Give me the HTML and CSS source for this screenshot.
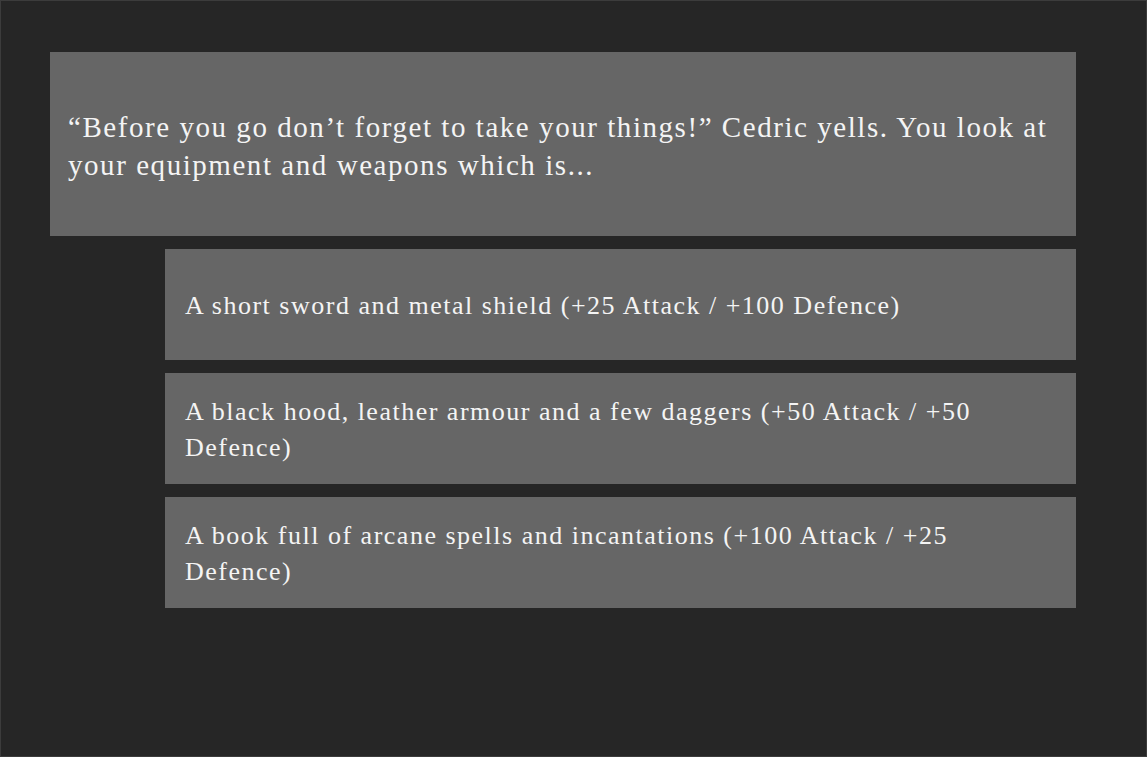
FILE: index.html
```html
<!DOCTYPE html>
<html>
<head>
<meta charset="utf-8">
<link rel="stylesheet" href="styles.css">
</head>
<body>
<div class="screen">
  <div class="story">
    <p>“Before you go don’t forget to take your things!” Cedric yells. You look at your equipment and weapons which is...</p>
  </div>
  <div class="choices">
    <div class="choice"><p>A short sword and metal shield (+25 Attack / +100 Defence)</p></div>
    <div class="choice"><p>A black hood, leather armour and a few daggers (+50 Attack / +50 Defence)</p></div>
    <div class="choice"><p>A book full of arcane spells and incantations (+100 Attack / +25 Defence)</p></div>
  </div>
</div>
</body>
</html>
```
FILE: styles.css
```css
html, body {
  margin: 0;
  padding: 0;
  height: 100%;
}
body {
  background: #262626;
  font-family: "Liberation Serif", "DejaVu Serif", serif;
  color: #f4f4f4;
}
.screen {
  box-sizing: border-box;
  height: 757px;
  border: 1px solid #3c3c3c;
  padding: 51px 70px 0 49px;
  display: flex;
  flex-direction: column;
  gap: 13px;
}
.story {
  box-sizing: border-box;
  background: #666666;
  height: 184px;
  display: flex;
  align-items: center;
  padding: 4px 18px 0;
}
.story p {
  margin: 0;
  font-size: 29px;
  line-height: 38px;
  letter-spacing: 1.55px;
}
.choices {
  display: flex;
  flex-direction: column;
  gap: 13px;
  margin-left: 115px;
}
.choice {
  box-sizing: border-box;
  background: #666666;
  height: 111px;
  display: flex;
  align-items: center;
  padding: 3px 20px 0;
}
.choice p {
  margin: 0;
  font-size: 26px;
  line-height: 36px;
  letter-spacing: 1.5px;
}
```
